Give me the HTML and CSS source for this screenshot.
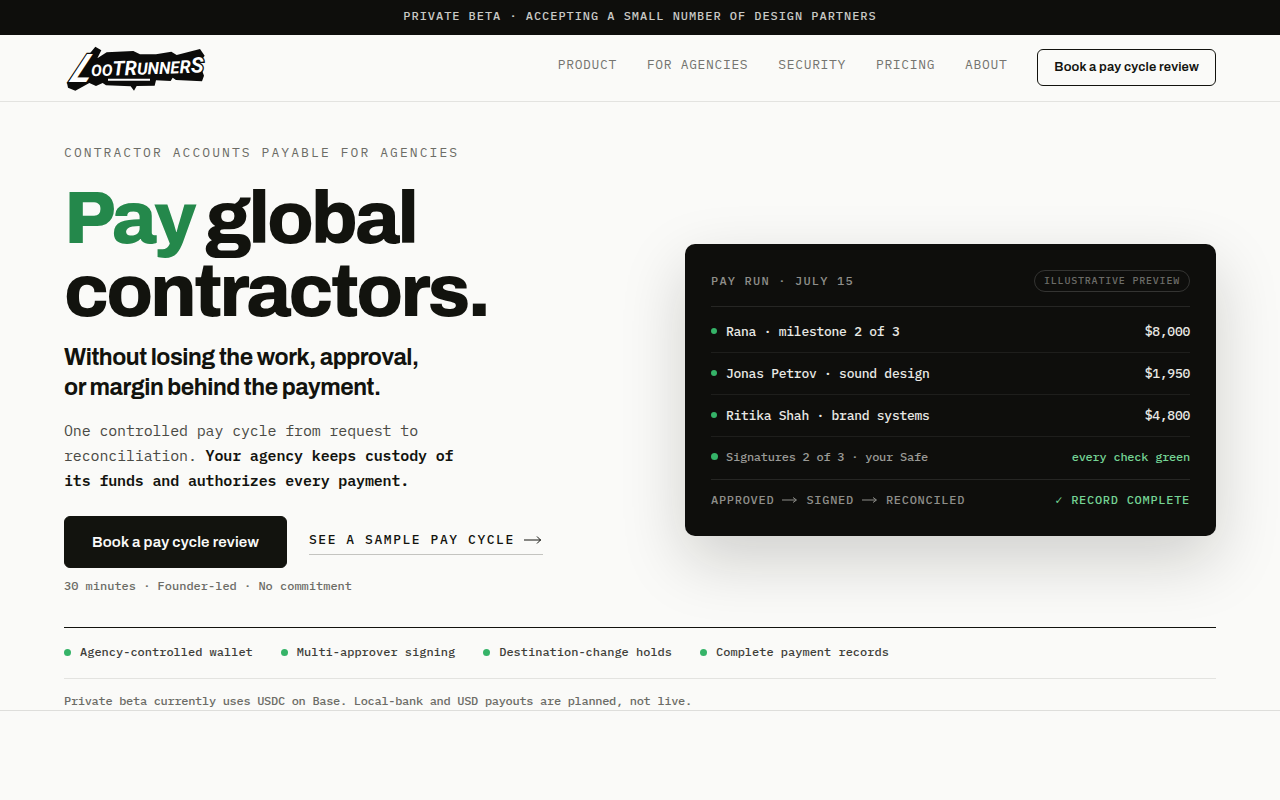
FILE: index.html
```
<!DOCTYPE html>
<html lang="en">
<head>
  <meta charset="UTF-8">
  <title>Lootrunners - Contractor accounts payable for agencies</title>
  <meta name="viewport" content="width=device-width, initial-scale=1.0">
  <link rel="stylesheet" href="styles.css">
</head>
<body>
  <div class="banner">Private beta · Accepting a small number of design partners</div>

  <header class="site-header">
    <div class="wrap header-row">
      <a class="logo" href="#" aria-label="Lootrunners">
        <svg width="144" height="48" viewBox="24 12 432 144" aria-hidden="true">
          <path d="M118 23 L136 34 L124 58 L152 40 L232 36 L252 46 L300 46 L346 38 L362 48 L432 30 L446 50 L430 72 L444 110 L438 127 L360 123 L350 116 L344 126 L300 124 L296 140 L242 141 L234 155 L224 142 L150 139 L140 132 L120 141 L100 132 L58 155 L36 146 L33 132 L66 86 Z" fill="#0b0b0a"/>
          <path d="M156 122 H282" stroke="#fff" stroke-width="6"/>
          <text class="logo-text" font-size="118" transform="translate(37 128) skewX(-26)">L</text>
          <text class="logo-text" x="106" y="112" transform="rotate(-2 106 112)"><tspan font-size="48">OO</tspan><tspan font-size="60">TR</tspan><tspan font-size="50">UNNE</tspan><tspan font-size="54">R</tspan><tspan font-size="64">S</tspan></text>
        </svg>
      </a>
      <nav class="site-nav">
        <a href="#">Product</a>
        <a href="#">For agencies</a>
        <a href="#">Security</a>
        <a href="#">Pricing</a>
        <a href="#">About</a>
        <button class="btn btn-outline" type="button">Book a pay cycle review</button>
      </nav>
    </div>
  </header>

  <main class="hero">
    <div class="wrap">
      <div class="hero-grid">
        <section class="intro">
          <p class="eyebrow">Contractor accounts payable for agencies</p>
          <h1><span class="green">Pay</span> global<br>contractors.</h1>
          <h2>Without losing the work, approval,<br>or margin behind the payment.</h2>
          <p class="lead">One controlled pay cycle from request to reconciliation. <strong>Your agency keeps custody of its funds and authorizes every payment.</strong></p>
          <div class="actions">
            <button class="btn btn-solid" type="button">Book a pay cycle review</button>
            <a class="sample-link" href="#">See a sample pay cycle
              <svg class="arrow" width="20" height="10" viewBox="0 0 20 10" aria-hidden="true"><path d="M1 5H18M14 1.500L17.500 5L14 8.500"/></svg>
            </a>
          </div>
          <p class="note">30 minutes · Founder-led · No commitment</p>
        </section>

        <section class="card">
          <div class="card-head">
            <span>Pay run · July 15</span>
            <span class="pill">Illustrative preview</span>
          </div>
          <ul class="runs">
            <li><span class="dot"></span>Rana · milestone 2 of 3<span class="amount">$8,000</span></li>
            <li><span class="dot"></span>Jonas Petrov · sound design<span class="amount">$1,950</span></li>
            <li><span class="dot"></span>Ritika Shah · brand systems<span class="amount">$4,800</span></li>
            <li class="signatures"><span class="dot"></span>Signatures 2 of 3 · your Safe<span class="amount">every check green</span></li>
          </ul>
          <div class="card-foot">
            <span class="steps">Approved
              <svg class="arrow" width="16" height="8" viewBox="0 0 16 8" aria-hidden="true"><path d="M0 4H14M11 1.500L14.500 4L11 6.500"/></svg>
              Signed
              <svg class="arrow" width="16" height="8" viewBox="0 0 16 8" aria-hidden="true"><path d="M0 4H14M11 1.500L14.500 4L11 6.500"/></svg>
              Reconciled</span>
            <span class="complete"><span class="check">✓</span> Record complete</span>
          </div>
        </section>
      </div>

      <ul class="trust">
        <li><span class="dot"></span>Agency-controlled wallet</li>
        <li><span class="dot"></span>Multi-approver signing</li>
        <li><span class="dot"></span>Destination-change holds</li>
        <li><span class="dot"></span>Complete payment records</li>
      </ul>
      <p class="disclaimer">Private beta currently uses USDC on Base. Local-bank and USD payouts are planned, not live.</p>
    </div>
  </main>
</body>
</html>
```
FILE: styles.css
```
* {
  box-sizing: border-box;
}
body {
  margin: 0;
  background: #fafaf8;
  color: #12130e;
  font-family: "IBM Plex Mono", "Liberation Mono", monospace;
  font-size: 12px;
  font-weight: 500;
  line-height: 16px;
}
h1, h2, p, ul {
  margin: 0;
  padding: 0;
}
ul {
  list-style: none;
}
a {
  color: inherit;
  text-decoration: none;
}
.wrap {
  max-width: 1280px;
  margin: 0 auto;
  padding: 0 64px;
}
.banner {
  background: #0e0e0c;
  color: #c9c9c5;
  padding: 8px 16px 11px;
  text-align: center;
  text-transform: uppercase;
  letter-spacing: 0.08em;
}

/* header */
.site-header {
  border-bottom: 1px solid #e3e3e0;
}
.header-row {
  display: flex;
  align-items: center;
  justify-content: space-between;
  min-height: 66px;
  padding-bottom: 2px;
}
.logo svg {
  display: block;
}
.logo-text {
  font-family: Roboto, sans-serif;
  font-weight: 700;
  font-style: italic;
  fill: #fff;
  stroke: #0b0b0a;
  stroke-width: 8px;
  paint-order: stroke;
}
.site-nav {
  display: flex;
  align-items: center;
  gap: 30px;
  font-size: 13px;
  font-weight: 400;
  color: #74746f;
}
.site-nav a {
  text-transform: uppercase;
  letter-spacing: 0.05em;
  padding-bottom: 4px;
}
.btn {
  font-family: Archivo, Inter, sans-serif;
  font-weight: 600;
  border-radius: 6px;
  border: 1px solid #12130e;
  letter-spacing: 0.01em;
  cursor: pointer;
}
.btn-outline {
  background: transparent;
  color: #12130e;
  font-size: 13px;
  line-height: 17px;
  padding: 9px 16px;
}
.btn-solid {
  background: #12130e;
  color: #fafaf8;
  font-size: 15px;
  line-height: 20px;
  padding: 15px 27px;
}

/* hero */
.hero {
  padding-top: 41px;
  border-bottom: 1px solid #dededb;
}
.hero-grid {
  display: grid;
  grid-template-columns: 1fr 531px;
  gap: 48px;
  align-items: center;
  padding-bottom: 33px;
}
.eyebrow {
  font-size: 13px;
  font-weight: 400;
  line-height: 20px;
  letter-spacing: 0.16em;
  text-transform: uppercase;
  color: #6c6c66;
}
h1 {
  margin-top: 19px;
  font-family: Archivo, Inter, sans-serif;
  font-size: 74px;
  line-height: 73px;
  font-weight: 800;
  letter-spacing: -0.04em;
}
.green {
  color: #24884b;
}
h2 {
  margin-top: 15px;
  font-family: Archivo, Inter, sans-serif;
  font-size: 23px;
  line-height: 30px;
  font-weight: 700;
  letter-spacing: -0.02em;
}
.lead {
  margin-top: 15px;
  max-width: 400px;
  font-size: 15px;
  font-weight: 400;
  line-height: 25px;
  letter-spacing: -0.01em;
  color: #4a4a45;
}
.lead strong {
  font-weight: 600;
  color: #12130e;
}
.actions {
  display: flex;
  align-items: center;
  gap: 22px;
  margin-top: 23px;
}
.sample-link {
  display: flex;
  align-items: center;
  gap: 8px;
  font-size: 13px;
  line-height: 20px;
  padding-bottom: 4px;
  border-bottom: 1px solid #c4c4c0;
  text-transform: uppercase;
  letter-spacing: 0.12em;
}
.arrow {
  fill: none;
  stroke: currentColor;
  stroke-width: 1;
}
.note {
  margin-top: 10px;
  color: #6c6c66;
}

/* pay run card */
.card {
  margin-top: 42px;
  background: #0e0e0c;
  color: #e8e8e4;
  border-radius: 10px;
  padding: 26px 26px 28px;
  box-shadow: 0 24px 64px rgba(14, 14, 12, 0.18);
}
.card-head {
  display: flex;
  align-items: center;
  justify-content: space-between;
  padding-bottom: 14px;
  border-bottom: 1px solid #262624;
  text-transform: uppercase;
  letter-spacing: 0.1em;
  color: #8e8e8a;
}
.pill {
  border: 1px solid #343432;
  border-radius: 11px;
  padding: 2px 9px;
  font-size: 10px;
  letter-spacing: 0.08em;
  color: #6c6c68;
}
.dot {
  flex: none;
  width: 7px;
  height: 7px;
  border-radius: 50%;
  background: #35b368;
}
.runs {
  padding-top: 4px;
}
.runs li {
  display: flex;
  align-items: center;
  gap: 9px;
  padding: 12px 0;
  font-size: 13px;
  line-height: 17px;
  letter-spacing: -0.02em;
  border-bottom: 1px solid #1e1e1c;
}
.runs .dot {
  width: 6px;
  height: 6px;
}
.amount {
  margin-left: auto;
}
.runs .signatures {
  gap: 8px;
  padding: 11px 0 13px;
  font-size: 12px;
  line-height: 18px;
  color: #9a9a96;
  border-bottom-color: #262624;
}
.signatures .dot {
  width: 7px;
  height: 7px;
}
.signatures .amount,
.complete {
  color: #74d394;
}
.check {
  font-family: "DejaVu Sans Mono", monospace;
}
.card-foot {
  display: flex;
  justify-content: space-between;
  padding-top: 12px;
  text-transform: uppercase;
  letter-spacing: 0.06em;
  color: #8e8e8a;
}
.steps {
  display: flex;
  align-items: center;
  gap: 8px;
}

/* trust strip */
.trust {
  display: flex;
  flex-wrap: wrap;
  gap: 28px;
  padding: 16px 0 18px;
  border-top: 1px solid #12130e;
  border-bottom: 1px solid #e3e3e0;
  color: #3f3f3a;
}
.trust li {
  display: flex;
  align-items: center;
  gap: 9px;
}
.disclaimer {
  padding: 14px 0 1px;
  letter-spacing: -0.025em;
  color: #6c6c66;
}
```
